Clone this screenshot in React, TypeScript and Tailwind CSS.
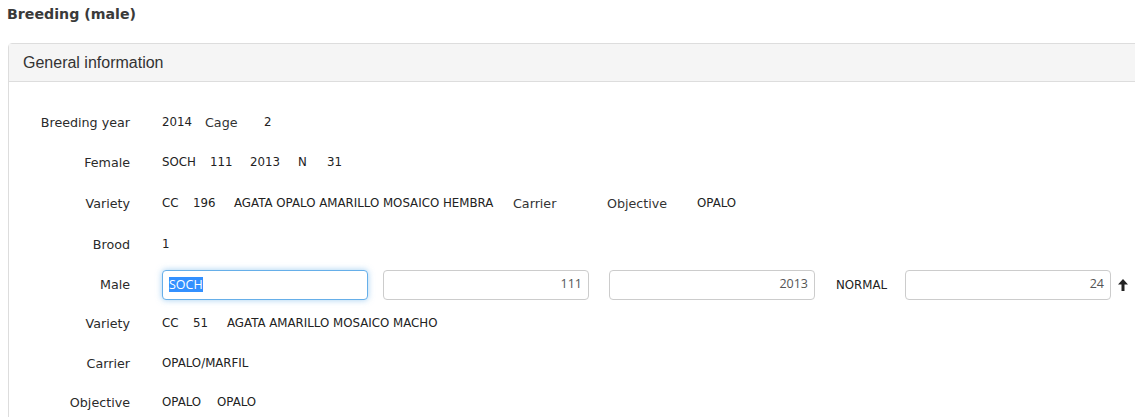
import React from "react"

const labelFont = { fontFamily: '"DejaVu Sans", Verdana, sans-serif' }

function Row({ label, children, h = "h-[40px]" }: { label: string; children: React.ReactNode; h?: string }) {
  return (
    <div className={`flex items-center ${h}`}>
      <div className="w-[121px] shrink-0 text-right text-[12.7px] text-[#2a2a2a]">{label}</div>
      <div className="ml-[32px] flex items-center text-[11.8px] text-[#222]">{children}</div>
    </div>
  )
}

function Field({ value, focused = false }: { value: string; focused?: boolean }) {
  const base = "h-[30px] w-[206px] rounded-[4px] border bg-white px-[6px] text-[12.5px] text-[#555] flex items-center"
  if (focused) {
    return (
      <div className={`${base} border-[#66afe9] shadow-[0_0_6px_rgba(102,175,233,0.6)]`}>
        <span className="bg-[#3390ff] text-white leading-[15px]">{value}</span>
      </div>
    )
  }
  return <div className={`${base} border-[#ccc] justify-end`}>{value}</div>
}

export default function App() {
  return (
    <div className="min-h-[417px] w-[1135px] overflow-hidden bg-white" style={labelFont}>
      <h2 className="h-[32px] pl-[7px] pt-[4px] text-[14.2px] font-bold text-[#3a3a3a]">Breeding (male)</h2>
      <div className="ml-[8px] mt-[11px] w-[1140px] rounded-tl-[4px] border border-[#ddd]">
        <div
          className="flex h-[38px] items-center border-b border-[#ddd] bg-[#f5f5f5] pl-[14px] text-[16px] text-[#333]"
          style={{ fontFamily: '"Liberation Sans", Arial, sans-serif' }}
        >
          General information
        </div>
        <div className="pt-[21px] pb-[10px]">
          <Row label="Breeding year">
            <span className="w-[43px]">2014</span>
            <span className="w-[59px] text-[12.7px] text-[#333]">Cage</span>
            <span>2</span>
          </Row>
          <Row label="Female">
            <span className="w-[48px]">SOCH</span>
            <span className="w-[40px]">111</span>
            <span className="w-[48px]">2013</span>
            <span className="w-[29px]">N</span>
            <span>31</span>
          </Row>
          <Row label="Variety" h="h-[42px]">
            <span className="w-[31px]">CC</span>
            <span className="w-[41px]">196</span>
            <span className="w-[279px]">AGATA OPALO AMARILLO MOSAICO HEMBRA</span>
            <span className="w-[94px] text-[12.7px] text-[#333]">Carrier</span>
            <span className="w-[90px] text-[12.7px] text-[#333]">Objective</span>
            <span>OPALO</span>
          </Row>
          <Row label="Brood">
            <span>1</span>
          </Row>
          <Row label="Male" h="h-[39px]">
            <div className="flex items-center" style={{ fontFamily: '"Open Sans", "Noto Sans", sans-serif' }}>
              <Field value="SOCH" focused />
              <div className="ml-[15px]"><Field value="111" /></div>
              <div className="ml-[20px]"><Field value="2013" /></div>
              <span className="ml-[21px] mt-[2px] w-[69px] text-[11.8px] text-[#222]" style={labelFont}>NORMAL</span>
              <Field value="24" />
              <svg className="ml-[7px]" width="10" height="12" viewBox="0 0 10 12">
                <path d="M5 0 L10 5.5 L6.5 5.5 L6.5 12 L3.5 12 L3.5 5.5 L0 5.5 Z" fill="#222" />
              </svg>
            </div>
          </Row>
          <Row label="Variety" h="h-[40px]">
            <span className="w-[31px]">CC</span>
            <span className="w-[34px]">51</span>
            <span>AGATA AMARILLO MOSAICO MACHO</span>
          </Row>
          <Row label="Carrier" h="h-[39px]">
            <span>OPALO/MARFIL</span>
          </Row>
          <Row label="Objective">
            <span className="w-[55px]">OPALO</span>
            <span>OPALO</span>
          </Row>
        </div>
      </div>
    </div>
  )
}
